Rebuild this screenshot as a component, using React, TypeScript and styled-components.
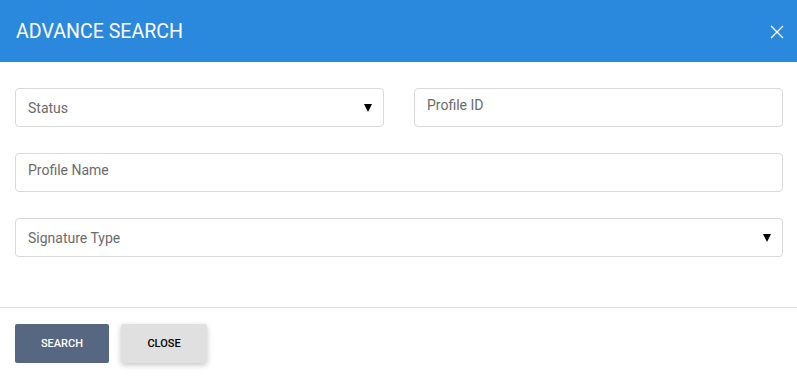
import styled, { createGlobalStyle } from 'styled-components';

const GlobalStyle = createGlobalStyle`
    html, body {
        margin: 0;
        padding: 0;
        background: #fff;
        font-family: Roboto, 'Liberation Sans', sans-serif;
    }
`;

const Modal = styled.div`
    width: 797px;
    height: 377px;
    display: flex;
    flex-direction: column;
    background: #fff;
`;

const Header = styled.div`
    height: 62px;
    background: #2a88dd;
    display: flex;
    align-items: center;
    justify-content: space-between;
    padding: 0 13px 0 16px;
    box-sizing: border-box;
`;

const Title = styled.h2`
    margin: 0;
    color: #fff;
    font-size: 19.6px;
    font-weight: 400;
    padding-top: 1px;
`;

const CloseIcon = styled.button`
    width: 14px;
    height: 14px;
    padding: 0;
    border: 0;
    background: transparent;
    cursor: pointer;
    display: flex;
    margin-top: 1px;
`;

const Body = styled.div`
    display: flex;
    flex-direction: column;
    gap: 26px;
    padding: 26px 14px 50px 15px;
    border-bottom: 1px solid #e0e0e0;
`;

const Row = styled.div<{ cols?: number }>`
    display: grid;
    grid-template-columns: ${({ cols }) => (cols === 2 ? '1fr 1fr' : '1fr')};
    column-gap: 30px;
`;

const Field = styled.div`
    height: 39px;
    box-sizing: border-box;
    border: 1px solid #d9d9d9;
    border-radius: 4px;
    font-size: 14px;
    color: #6b6b6b;
`;

const Select = styled(Field)`
    display: flex;
    align-items: center;
    justify-content: space-between;
    padding: 0 11px 0 12px;
    cursor: pointer;
`;

const Input = styled(Field)`
    padding: 8px 12px 0 12px;
`;

const Caret = styled.span`
    width: 0;
    height: 0;
    border-left: 4.5px solid transparent;
    border-right: 4.5px solid transparent;
    border-top: 8px solid #000;
    margin-top: 1px;
`;

const Footer = styled.div`
    display: flex;
    gap: 12px;
    padding: 16px 15px 0 15px;
`;

const Button = styled.button<{ primary?: boolean }>`
    height: 39px;
    width: ${({ primary }) => (primary ? '94px' : '86px')};
    border: 0;
    border-radius: 2px;
    font-family: Roboto, 'Liberation Sans', sans-serif;
    font-size: 11px;
    font-weight: 500;
    text-transform: uppercase;
    cursor: pointer;
    background: ${({ primary }) => (primary ? '#566782' : '#e0e0e0')};
    color: ${({ primary }) => (primary ? '#fff' : '#000')};
    box-shadow: ${({ primary }) =>
        primary ? 'none' : '0 2px 5px rgba(0, 0, 0, 0.16), 0 2px 8px rgba(0, 0, 0, 0.08)'};
`;

const App = () => {
    return (
        <>
            <GlobalStyle />
            <Modal>
                <Header>
                    <Title>ADVANCE SEARCH</Title>
                    <CloseIcon aria-label="close">
                        <svg width="14" height="14" viewBox="0 0 14 14">
                            <path d="M1 1L13 13M13 1L1 13" stroke="#fff" strokeWidth="1.4" />
                        </svg>
                    </CloseIcon>
                </Header>
                <Body>
                    <Row cols={2}>
                        <Select>
                            <span>Status</span>
                            <Caret />
                        </Select>
                        <Input>Profile ID</Input>
                    </Row>
                    <Row>
                        <Input>Profile Name</Input>
                    </Row>
                    <Row>
                        <Select>
                            <span>Signature Type</span>
                            <Caret />
                        </Select>
                    </Row>
                </Body>
                <Footer>
                    <Button primary>Search</Button>
                    <Button>Close</Button>
                </Footer>
            </Modal>
        </>
    );
};

export default App;
